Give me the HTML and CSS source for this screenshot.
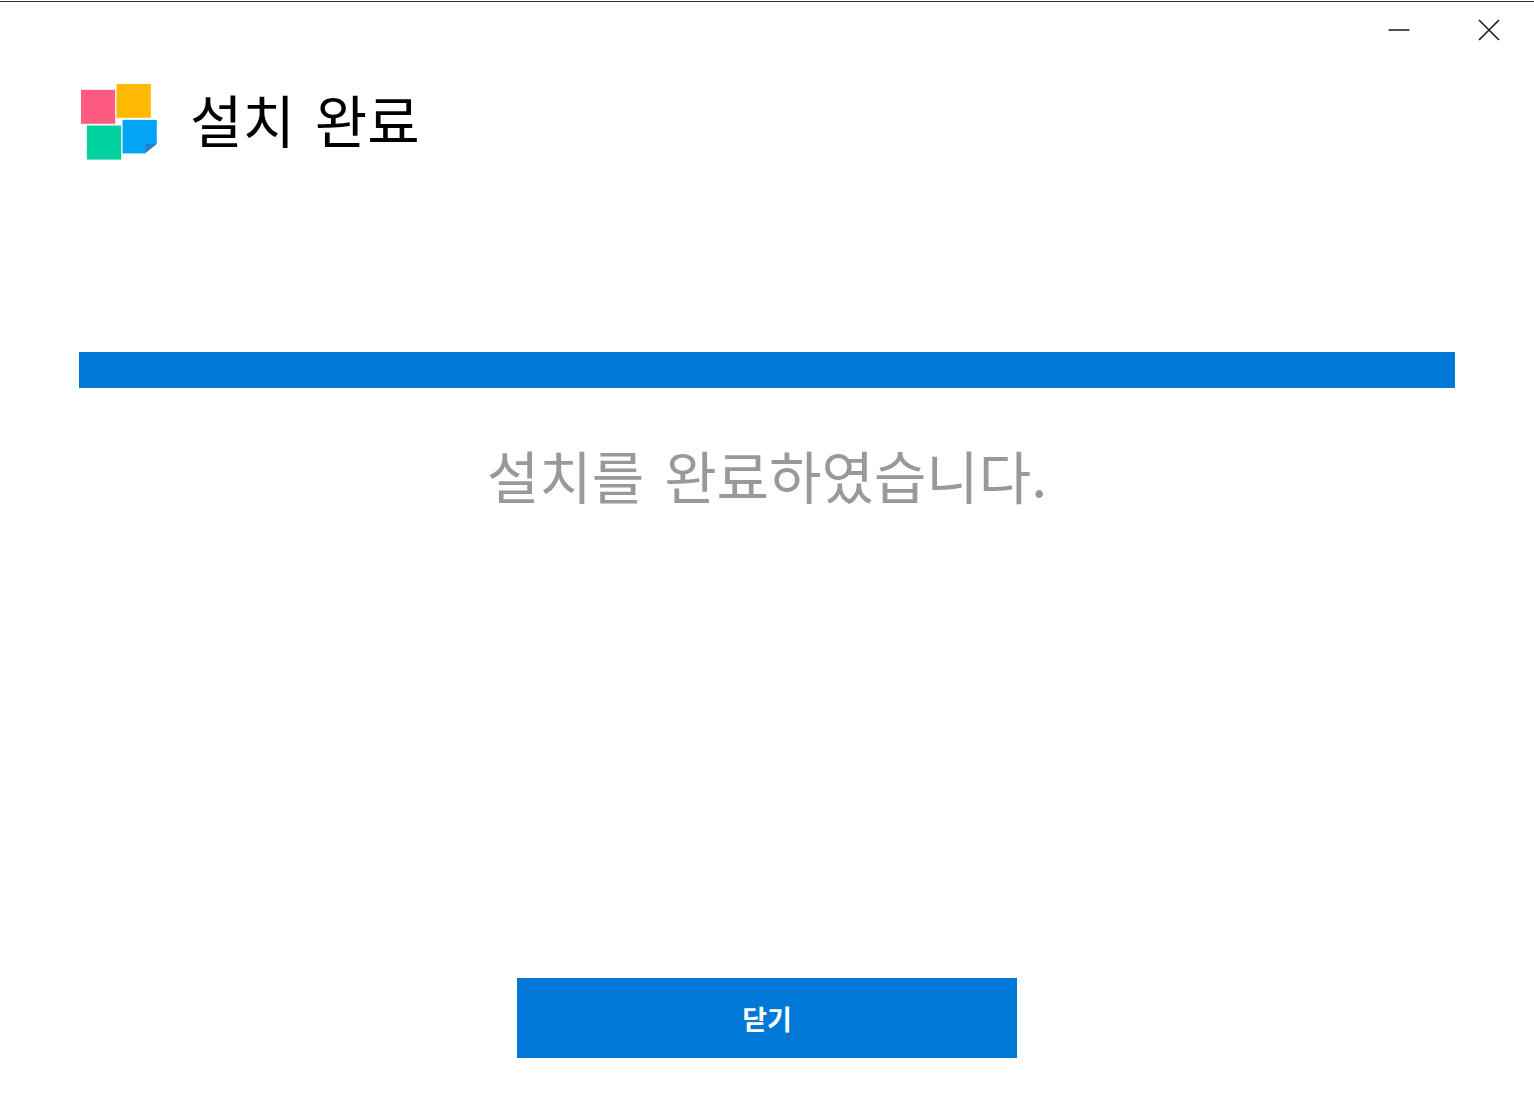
FILE: index.html
```html
<!DOCTYPE html>
<html lang="ko">
<head>
    <meta charset="UTF-8">
    <meta name="viewport" content="width=device-width, initial-scale=1.0">
    <title>설치 완료</title>
    <link rel="stylesheet" href="styles.css">
</head>
<body>
    <div class="window">
        <div class="titlebar">
            <button class="win-btn" aria-label="최소화">
                <svg width="22" height="22" viewBox="0 0 22 22"><path d="M0.5 11H21.5" stroke="#222" stroke-width="1.6" fill="none"/></svg>
            </button>
            <button class="win-btn" aria-label="닫기">
                <svg width="22" height="22" viewBox="0 0 22 22"><path d="M1 1L21 21M21 1L1 21" stroke="#222" stroke-width="1.7" fill="none"/></svg>
            </button>
        </div>

        <div class="header">
            <svg class="logo" width="76" height="76" viewBox="0 0 76 76">
                <rect x="35.7" y="0" width="34" height="33.7" fill="#ffb900" stroke="#ffb900" stroke-opacity="0.3"/>
                <rect x="0" y="6" width="34" height="33.7" fill="#ff5a80" stroke="#ff5a80" stroke-opacity="0.3"/>
                <rect x="6" y="41.7" width="34" height="33.7" fill="#00d29f" stroke="#00d29f" stroke-opacity="0.3"/>
                <path d="M41.7 36H75.7V60L64 69.3H41.7Z" fill="#03a4f4" stroke="#03a4f4" stroke-opacity="0.3"/>
                <path d="M64 69L65 60H75Z" fill="#2a7fc0"/>
            </svg>
            <h1 class="title">설치 완료</h1>
        </div>

        <div class="progress"></div>
        <p class="message">설치를 완료하였습니다.</p>

        <div class="footer">
            <button class="btn">닫기</button>
        </div>
    </div>
</body>
</html>
```

FILE: styles.css
```css
body {
    font-family: "Noto Sans CJK KR", "Noto Sans", sans-serif;
    background-color: #fff;
    margin: 0;
    padding-top: 1px;
}
.window {
    height: 1117px;
    box-sizing: border-box;
    border-top: 1px solid #333;
    display: flex;
    flex-direction: column;
    overflow: hidden;
}
.titlebar {
    display: flex;
    justify-content: flex-end;
    gap: 68px;
    padding: 17px 34px 0 0;
}
.win-btn {
    width: 22px;
    height: 22px;
    padding: 0;
    border: none;
    background: none;
    display: flex;
}
.header {
    display: flex;
    align-items: center;
    margin-top: 43px;
    padding-left: 81px;
}
.title {
    margin: 0 0 7px 33px;
    font-size: 57px;
    line-height: 69px;
    font-weight: 400;
    word-spacing: 4px;
    color: #000;
}
.progress {
    height: 36px;
    margin: 192px 79px 0;
    background-color: #0078d7;
}
.message {
    margin: 48px 0 0;
    font-size: 57px;
    line-height: 76px;
    word-spacing: 4px;
    text-align: center;
    color: #999;
}
.footer {
    display: flex;
    justify-content: center;
    margin-top: 466px;
}
.btn {
    width: 500px;
    height: 80px;
    font-family: inherit;
    font-size: 27px;
    font-weight: 700;
    color: #fff;
    background-color: #0078d7;
    border: none;
}
```
